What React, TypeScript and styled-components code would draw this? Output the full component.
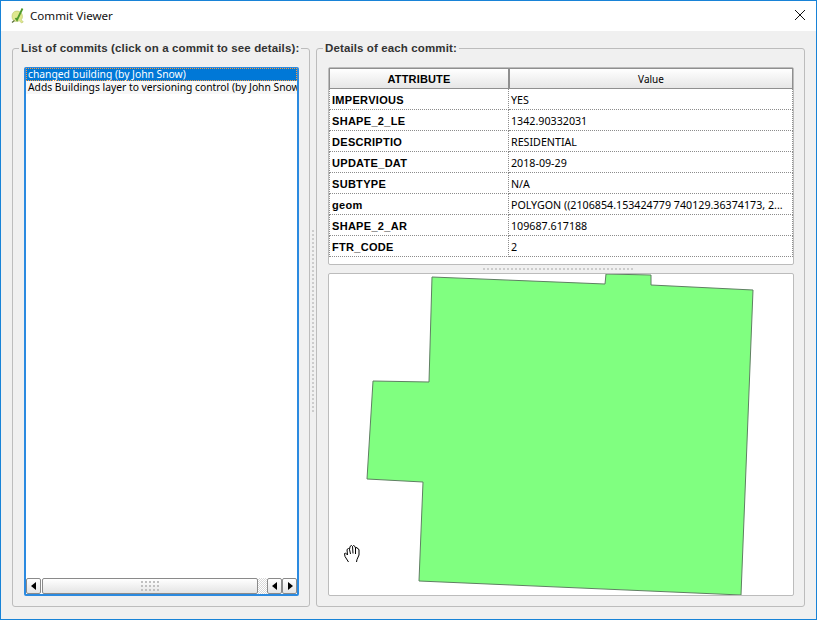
import React from 'react';
import styled, { createGlobalStyle } from 'styled-components';

const UI_FONT = '"Noto Sans", "Open Sans", sans-serif';
const BORDER_COLOR = '#bcbcbc';
const WINDOW_BLUE = '#1883d7';

const GlobalStyle = createGlobalStyle`
  html, body {
    margin: 0;
    padding: 0;
    background: #f0f0f0;
  }
`;

const Window = styled.div`
  display: flex;
  flex-direction: column;
  box-sizing: border-box;
  width: 817px;
  height: 620px;
  border: 1px solid ${WINDOW_BLUE};
  background: #f0f0f0;
  overflow: hidden;
`;

const TitleBar = styled.div`
  display: flex;
  align-items: center;
  flex: none;
  box-sizing: border-box;
  height: 30px;
  padding: 0 11px 2px 9px;
  background: #fff;
`;

const WindowTitle = styled.span`
  flex: 1;
  margin-left: 4px;
  font: 11.6px ${UI_FONT};
  color: #111;
`;

const Body = styled.div`
  display: flex;
  flex: 1;
  min-height: 0;
  padding: 11px 11px 12px 11px;
`;

const Group = styled.fieldset<{ $width: number }>`
  display: flex;
  flex-direction: column;
  box-sizing: border-box;
  flex: none;
  width: ${props => props.$width}px;
  min-width: 0;
  margin: 0;
  padding: 12px 10px 10px 11px;
  border: 1px solid ${BORDER_COLOR};
  border-radius: 3px;
`;

const GroupTitle = styled.legend`
  margin-left: -5px;
  padding: 0 2px;
  font: bold 11.5px/13px "Liberation Sans", sans-serif;
  letter-spacing: 0.12px;
  color: #333;
  white-space: nowrap;
`;

const ListBox = styled.div`
  display: flex;
  flex-direction: column;
  flex: 1;
  min-height: 0;
  border: 1px solid #2b8ae0;
  border-width: 1px 2px 2px 2px;
  border-radius: 2px;
  background: #fff;
`;

const CommitList = styled.div`
  flex: 1;
  overflow: hidden;
`;

const CommitRow = styled.div<{ $selected?: boolean }>`
  box-sizing: border-box;
  height: 13px;
  padding-left: 2px;
  font: 10.3px/13px ${UI_FONT};
  white-space: nowrap;
  overflow: hidden;
  color: ${props => (props.$selected ? '#fff' : '#000')};
  background: ${props => (props.$selected ? '#0078d7' : '#f7f7f7')};
  outline: ${props => (props.$selected ? '1px dotted #ff9a3c' : 'none')};
  outline-offset: -1px;
`;

const ScrollBar = styled.div`
  display: flex;
  flex: none;
  height: 16px;
`;

const ScrollButton = styled.div`
  display: flex;
  align-items: center;
  justify-content: center;
  flex: none;
  box-sizing: border-box;
  width: 15px;
  border: 1px solid #8a8a8a;
  border-radius: 2px;
  background: linear-gradient(#fff, #e4e4e4);
`;

const ScrollHandle = styled.div`
  display: flex;
  align-items: center;
  justify-content: center;
  flex: none;
  box-sizing: border-box;
  width: 216px;
  margin-left: 1px;
  border: 1px solid #8a8a8a;
  border-radius: 2px;
  background: linear-gradient(#fff, #e4e4e4);
`;

const ScrollTrack = styled.div`
  flex: 1;
  background: repeating-conic-gradient(#d8d8d8 0 25%, #fff 0 50%) 0 0 / 2px 2px;
`;

const Grip = styled.div`
  width: 18px;
  height: 10px;
  background: radial-gradient(circle at 1px 1px, #c0c0c0 1px, transparent 1px) 0 0 / 4px 4px;
`;

const VerticalSplit = styled.div`
  display: flex;
  align-items: center;
  justify-content: center;
  flex: none;
  width: 6px;
`;

const VerticalGrip = styled.div`
  width: 2px;
  height: 182px;
  margin-top: -7px;
  background: repeating-linear-gradient(#cccccc 0 2px, transparent 2px 4px);
`;

const HorizontalSplit = styled.div`
  display: flex;
  align-items: center;
  justify-content: center;
  flex: none;
  height: 8px;
`;

const HorizontalGrip = styled.div`
  width: 152px;
  height: 2px;
  margin-right: 4px;
  background: repeating-linear-gradient(90deg, #cccccc 0 2px, transparent 2px 4px);
`;

const AttributeBox = styled.div`
  flex: none;
  box-sizing: border-box;
  height: 198px;
  border: 1px solid ${BORDER_COLOR};
  border-radius: 2px;
  background: #fff;
`;

const Grid = styled.div`
  display: grid;
  grid-template-columns: 180px 284px;
  grid-auto-rows: 21px;
`;

const HeaderCell = styled.div<{ $bold?: boolean }>`
  display: flex;
  align-items: center;
  justify-content: center;
  box-sizing: border-box;
  border: 1px solid #8f8f8f;
  background: linear-gradient(#fff, #e6e6e6);
  color: #000;
  font: ${props => (props.$bold ? 'bold 11px "Liberation Sans"' : '10px "Noto Sans"')}, sans-serif;
  letter-spacing: ${props => (props.$bold ? '0.15px' : '0')};
`;

const NameCell = styled.div`
  box-sizing: border-box;
  padding-left: 2px;
  border-bottom: 1px dotted #8c8c8c;
  border-right: 1px dotted #8c8c8c;
  border-left: 1px dotted #8c8c8c;
  font: bold 11px/22px "Liberation Sans", sans-serif;
  letter-spacing: 0.3px;
  color: #000;
  overflow: hidden;
`;

const ValueCell = styled.div`
  box-sizing: border-box;
  padding-left: 2px;
  border-bottom: 1px dotted #8c8c8c;
  border-right: 1px dotted #8c8c8c;
  font: 10.7px/22px ${UI_FONT};
  color: #000;
  white-space: nowrap;
  overflow: hidden;
`;

const MapBox = styled.div`
  flex: 1;
  min-height: 0;
  border: 1px solid ${BORDER_COLOR};
  border-radius: 2px;
  background: #fff;
`;

const MapDrawing = styled.svg`
  display: block;
  width: 100%;
  height: 100%;
`;

const rows: [string, string][] = [
  ['IMPERVIOUS', 'YES'],
  ['SHAPE_2_LE', '1342.90332031'],
  ['DESCRIPTIO', 'RESIDENTIAL'],
  ['UPDATE_DAT', '2018-09-29'],
  ['SUBTYPE', 'N/A'],
  ['geom', 'POLYGON ((2106854.153424779 740129.36374173, 2...'],
  ['SHAPE_2_AR', '109687.617188'],
  ['FTR_CODE', '2'],
];

const Arrow = ({ left }: { left?: boolean }) => (
  <svg width="6" height="8" viewBox="0 0 6 8">
    <path d={left ? 'M5 0V8L0 4Z' : 'M1 0V8L6 4Z'} fill="#000" />
  </svg>
);

const QgisIcon = () => (
  <svg width="16" height="17" viewBox="0 0 16 17">
    <path d="M7 4C3.500 4 2 6.500 2 9.500c0 3 2 5 4.500 5 1.200 0 2-.3 2.800-.8L11.500 16l1.800-1-2-2.200c.8-1 1.200-2 1.200-3.200C12.500 6.500 10.500 4 7 4Z" fill="#dfe88f" stroke="#b9c46a" strokeWidth="0.6" />
    <path d="M5.500 11 7 13 12.500 1.500" fill="none" stroke="#4f9a2c" strokeWidth="1.800" />
    <path d="M2 15.500 4.500 13.500" stroke="#59703a" strokeWidth="1.200" />
  </svg>
);

const CloseIcon = () => (
  <svg width="10" height="10" viewBox="0 0 10 10">
    <path d="M0 0 10 10M10 0 0 10" stroke="#111" strokeWidth="1" />
  </svg>
);

const HandCursor = () => (
  <g transform="translate(344 545)" fill="#fff" stroke="#000" strokeWidth="1">
    <path d="M4.500 17 1 11.500.500 8.500 1.500 8 3.500 10 3 4.500 4.500 3.500 5.500 4.500 6 1.500 7.500.500 8.500 1.500 9.500.500 11 1.500 11.500 3 13 2.500 14 4 15 4.500 15 10 13 14.500 12.500 17" />
    <path d="M5.500 4.500 6.500 9M8.500 1.500 9 8.500M11.500 3 11.500 9" fill="none" />
  </g>
);

const App = () => (
  <>
    <GlobalStyle />
    <Window>
      <TitleBar>
        <QgisIcon />
        <WindowTitle>Commit Viewer</WindowTitle>
        <CloseIcon />
      </TitleBar>
      <Body>
        <Group $width={298}>
          <GroupTitle>List of commits (click on a commit to see details):</GroupTitle>
          <ListBox>
            <CommitList>
              <CommitRow $selected>changed building (by John Snow)</CommitRow>
              <CommitRow>Adds Buildings layer to versioning control (by John Snow)</CommitRow>
            </CommitList>
            <ScrollBar>
              <ScrollButton><Arrow left /></ScrollButton>
              <ScrollHandle><Grip /></ScrollHandle>
              <ScrollTrack />
              <ScrollButton><Arrow left /></ScrollButton>
              <ScrollButton><Arrow /></ScrollButton>
            </ScrollBar>
          </ListBox>
        </Group>
        <VerticalSplit><VerticalGrip /></VerticalSplit>
        <Group $width={489}>
          <GroupTitle>Details of each commit:</GroupTitle>
          <AttributeBox>
            <Grid>
              <HeaderCell $bold>ATTRIBUTE</HeaderCell>
              <HeaderCell>Value</HeaderCell>
              {rows.map(([name, value]) => (
                <React.Fragment key={name}>
                  <NameCell>{name}</NameCell>
                  <ValueCell>{value}</ValueCell>
                </React.Fragment>
              ))}
            </Grid>
          </AttributeBox>
          <HorizontalSplit><HorizontalGrip /></HorizontalSplit>
          <MapBox>
            <MapDrawing viewBox="329 274 464 321">
              <polygon
                points="432,277 605,284 606,274 651,275 651,285 753,290 741,595 419,581 423,482 367,479 373,381 429,382"
                fill="#80ff80"
                stroke="#5f7f62"
                strokeWidth="1"
              />
              <HandCursor />
            </MapDrawing>
          </MapBox>
        </Group>
      </Body>
    </Window>
  </>
);

export default App;
